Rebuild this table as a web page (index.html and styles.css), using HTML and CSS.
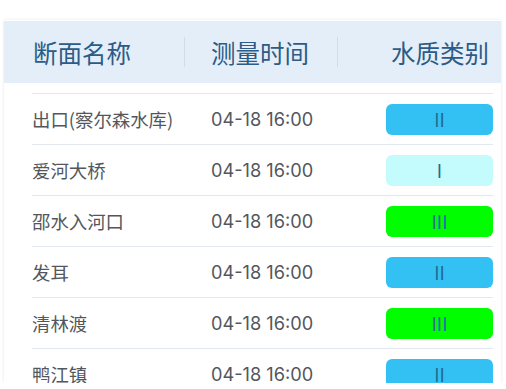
FILE: index.html
```html
<!DOCTYPE html>
<html lang="zh">
<head>
<meta charset="utf-8">
<link rel="stylesheet" href="styles.css">
</head>
<body>
<div class="card">
  <div class="head">
    <div class="hcell c1">断面名称</div>
    <div class="hsep"></div>
    <div class="hcell c2">测量时间</div>
    <div class="hsep"></div>
    <div class="hcell c3">水质类别</div>
  </div>
  <div class="rows">
    <div class="row"><div class="name">出口(察尔森水库)</div><div class="time">04-18 16:00</div><div class="badge b2">II</div></div>
    <div class="row"><div class="name">爱河大桥</div><div class="time">04-18 16:00</div><div class="badge b1">I</div></div>
    <div class="row"><div class="name">邵水入河口</div><div class="time">04-18 16:00</div><div class="badge b3">III</div></div>
    <div class="row"><div class="name">发耳</div><div class="time">04-18 16:00</div><div class="badge b2">II</div></div>
    <div class="row"><div class="name">清林渡</div><div class="time">04-18 16:00</div><div class="badge b3">III</div></div>
    <div class="row"><div class="name">鸭江镇</div><div class="time">04-18 16:00</div><div class="badge b2">II</div></div>
  </div>
</div>
</body>
</html>
```
FILE: styles.css
```css
html, body {
  margin: 0;
  padding: 0;
  background: #ffffff;
}
body {
  padding: 20px 5px 0 4px;
  font-family: "Inter", "Noto Sans CJK SC", sans-serif;
}
.card {
  width: 497px;
  height: 363px;
  overflow: hidden;
  background: #ffffff;
  box-shadow: 0 0 3px rgba(0, 0, 0, 0.10);
}
.head {
  height: 62px;
  margin-top: 1px;
  background: #e4eef8;
  display: grid;
  grid-template-columns: 151px 1px 152px 1px 1fr;
  align-items: center;
  padding: 0 12px 0 29px;
  font-family: "Noto Sans CJK SC", sans-serif;
  font-size: 24.5px;
  color: #2c5b88;
}
.hsep {
  height: 30px;
  background: #d2dce6;
}
.c2 { padding-left: 26px; }
.c3 { text-align: right; }
.rows {
  padding: 10px 8px 0 28px;
}
.row {
  display: grid;
  grid-template-columns: 179px 1fr 107px;
  align-items: center;
  height: 50px;
  border-top: 1px solid #e3e8ee;
  font-size: 18px;
  color: #53575c;
}
.name {
  font-family: "Noto Sans CJK SC", sans-serif;
  font-size: 18.4px;
}
.time {
  font-family: "Inter", sans-serif;
  font-size: 18.2px;
}
.badge {
  height: 31px;
  border-radius: 6px;
  display: flex;
  align-items: center;
  justify-content: center;
  font-family: "Noto Sans CJK SC", sans-serif;
  font-size: 18px;
  color: #1f6b92;
}
.b1 { background: #c4fbfd; }
.b2 { background: #33c1f4; }
.b3 { background: #00fe00; color: #2a6aa6; }
```
